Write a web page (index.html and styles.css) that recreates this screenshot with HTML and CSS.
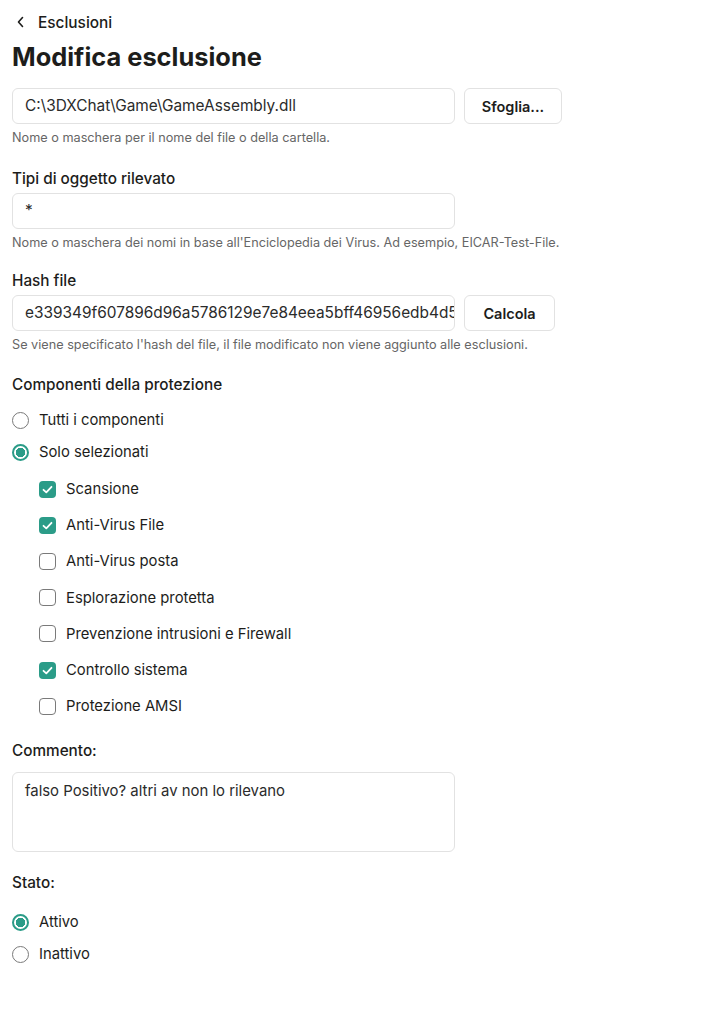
FILE: index.html
```html
<!DOCTYPE html>
<html lang="it">
<head>
    <meta charset="UTF-8">
    <meta name="viewport" content="width=device-width, initial-scale=1.0">
    <title>Modifica esclusione</title>
    <link rel="stylesheet" href="styles.css">
</head>
<body>
    <div class="page">
        <!-- Navigazione indietro -->
        <a class="back" href="#">
            <svg class="back-icon" width="10" height="12" viewBox="0 0 10 12"><path d="M6.5 1.5 L2.5 6 L6.5 10.5" fill="none" stroke="#1d1d1b" stroke-width="1.6" stroke-linecap="round" stroke-linejoin="round"/></svg>
            <span>Esclusioni</span>
        </a>
        <h1>Modifica esclusione</h1>

        <!-- Oggetto -->
        <div class="field first">
            <div class="row">
                <div class="input">C:\3DXChat\Game\GameAssembly.dll</div>
                <button class="btn btn-sfoglia">Sfoglia...</button>
            </div>
            <p class="hint">Nome o maschera per il nome del file o della cartella.</p>
        </div>

        <div class="field second">
            <div class="label">Tipi di oggetto rilevato</div>
            <div class="input">*</div>
            <p class="hint">Nome o maschera dei nomi in base all'Enciclopedia dei Virus. Ad esempio, EICAR-Test-File.</p>
        </div>

        <div class="field">
            <div class="label">Hash file</div>
            <div class="row">
                <div class="input clip">e339349f607896d96a5786129e7e84eea5bff46956edb4d5</div>
                <button class="btn btn-calcola">Calcola</button>
            </div>
            <p class="hint">Se viene specificato l'hash del file, il file modificato non viene aggiunto alle esclusioni.</p>
        </div>

        <!-- Componenti -->
        <div class="field componenti">
            <div class="label">Componenti della protezione</div>
            <div class="radios">
                <div class="option"><span class="radio"></span>Tutti i componenti</div>
                <div class="option"><span class="radio on"></span>Solo selezionati</div>
            </div>
            <div class="checks">
                <div class="option"><span class="check on"></span>Scansione</div>
                <div class="option"><span class="check on"></span>Anti-Virus File</div>
                <div class="option"><span class="check"></span>Anti-Virus posta</div>
                <div class="option"><span class="check"></span>Esplorazione protetta</div>
                <div class="option"><span class="check"></span>Prevenzione intrusioni e Firewall</div>
                <div class="option"><span class="check on"></span>Controllo sistema</div>
                <div class="option"><span class="check"></span>Protezione AMSI</div>
            </div>
        </div>

        <div class="field commento">
            <div class="label">Commento:</div>
            <div class="input area">falso Positivo? altri av non lo rilevano</div>
        </div>

        <div class="field stato">
            <div class="label">Stato:</div>
            <div class="radios">
                <div class="option"><span class="radio on"></span>Attivo</div>
                <div class="option"><span class="radio"></span>Inattivo</div>
            </div>
        </div>
    </div>
</body>
</html>
```

FILE: styles.css
```css
body {
    margin: 0;
    background-color: #fff;
    font-family: Inter, "Noto Sans", sans-serif;
    color: #1d1d1b;
}

.page {
    padding: 12px 12px 40px 12px;
    width: 560px;
}

.back {
    display: flex;
    align-items: center;
    gap: 12px;
    padding-left: 4px;
    height: 20px;
    color: #1d1d1b;
    text-decoration: none;
    font-size: 15.4px;
    font-weight: 500;
}

h1 {
    margin: 9px 0 0 0;
    font-size: 25.4px;
    font-weight: 700;
    line-height: 32px;
}

.field {
    margin-top: 20px;
}

.field.first {
    margin-top: 15px;
}

.field.second {
    margin-top: 23px;
}

.label {
    font-size: 15.3px;
    font-weight: 500;
    line-height: 20px;
    margin-bottom: 4px;
}

.row {
    display: flex;
    gap: 9px;
}

.input {
    box-sizing: border-box;
    width: 443px;
    height: 36px;
    border: 1px solid #e2e2e2;
    border-radius: 6px;
    padding: 0 12px;
    font-size: 15.4px;
    line-height: 34px;
    color: #2b2b2b;
    white-space: nowrap;
}

/* l'hash è più lungo del campo e viene tagliato */
.input.clip {
    overflow: hidden;
    text-overflow: clip;
}

.input.area {
    height: 80px;
    line-height: 20px;
    padding-top: 8px;
    font-size: 14.9px;
}

.btn {
    box-sizing: border-box;
    height: 36px;
    border: 1px solid #e2e2e2;
    border-radius: 6px;
    background-color: #fff;
    font-family: inherit;
    font-size: 14.5px;
    font-weight: 600;
    color: #1d1d1b;
    padding: 0;
}

.btn-sfoglia {
    width: 98px;
}

.btn-calcola {
    width: 91px;
}

.hint {
    margin: 6px 0 0 0;
    font-size: 12.7px;
    line-height: 16px;
    color: #666;
    white-space: nowrap;
}

.radios {
    margin-top: 9px;
}

.radios .option {
    height: 32px;
}

.checks {
    margin-top: 3px;
    padding-left: 27px;
}

.checks .option {
    height: 36.2px;
}

.option {
    display: flex;
    align-items: center;
    gap: 10px;
    font-size: 14.8px;
}

.radio {
    box-sizing: border-box;
    width: 17px;
    height: 17px;
    border: 1.5px solid #7a7a7a;
    border-radius: 50%;
}

.radio.on {
    border: 2px solid #2b9c88;
    background: radial-gradient(circle, #2b9c88 0 4.5px, #fff 5px);
}

.check {
    box-sizing: border-box;
    width: 17px;
    height: 17px;
    border: 1.5px solid #7a7a7a;
    border-radius: 4px;
}

.check.on {
    border: none;
    background-color: #2b9c88;
    background-image: url("data:image/svg+xml;utf8,<svg xmlns='http://www.w3.org/2000/svg' width='17' height='17' viewBox='0 0 17 17'><path d='M4.5 8.8 L7.3 11.4 L12.5 5.8' fill='none' stroke='white' stroke-width='1.8' stroke-linecap='round' stroke-linejoin='round'/></svg>");
}

.field.componenti {
    margin-top: 22px;
}

.field.commento {
    margin-top: 17px;
}

.commento .label {
    margin-bottom: 11px;
}

.field.stato {
    margin-top: 21px;
}

.stato .radios {
    margin-top: 13px;
}
```
